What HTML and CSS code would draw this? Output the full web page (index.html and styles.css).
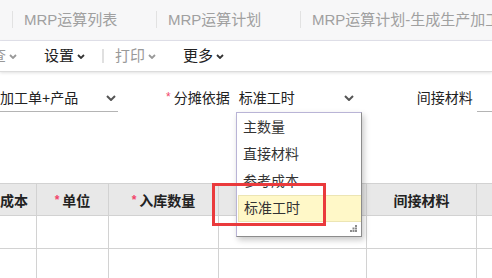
FILE: index.html
```html
<!DOCTYPE html>
<html lang="zh">
<head>
<meta charset="utf-8">
<link rel="stylesheet" href="styles.css">
</head>
<body>
<div class="page">
  <div class="tabs">
    <div class="tab">MRP运算列表</div>
    <div class="tab">MRP运算计划</div>
    <div class="tab tab-wide">MRP运算计划-生成生产加工单</div>
  </div>
  <div class="toolbar">
    <div class="tool tool-first">查<svg class="chev-s" viewBox="0 0 8 5"><polyline points="1,1 4,4 7,1"/></svg></div>
    <div class="tool tool-set">设置<svg class="chev-s dark" viewBox="0 0 8 5"><polyline points="1,1 4,4 7,1"/></svg></div>
    <div class="tool-sep"></div>
    <div class="tool tool-print muted">打印<svg class="chev-s" viewBox="0 0 8 5"><polyline points="1,1 4,4 7,1"/></svg></div>
    <div class="tool">更多<svg class="chev-s dark" viewBox="0 0 8 5"><polyline points="1,1 4,4 7,1"/></svg></div>
  </div>
  <div class="form">
    <div class="form-row">
      <div class="field field-1"><span>加工单+产品</span><svg class="chev" viewBox="0 0 10 6"><polyline points="1,1 5,5 9,1"/></svg></div>
      <div class="label label-1"><span class="req">*</span>分摊依据</div>
      <div class="field field-2"><span>标准工时</span><svg class="chev" viewBox="0 0 10 6"><polyline points="1,1 5,5 9,1"/></svg></div>
      <div class="label label-2">间接材料</div>
      <div class="field field-3"></div>
    </div>
  </div>
  <table class="grid">
    <colgroup>
      <col class="c1"><col class="c2"><col class="c3"><col class="c4"><col class="c5"><col class="c6">
    </colgroup>
    <thead>
      <tr>
        <th class="first">成本</th>
        <th><span class="req">*</span>单位</th>
        <th><span class="req">*</span>入库数量</th>
        <th></th>
        <th>间接材料</th>
        <th></th>
      </tr>
    </thead>
    <tbody>
      <tr><td></td><td></td><td></td><td></td><td></td><td></td></tr>
      <tr><td></td><td></td><td></td><td></td><td></td><td></td></tr>
    </tbody>
  </table>
  <div class="dropdown">
    <div class="opt">主数量</div>
    <div class="opt">直接材料</div>
    <div class="opt">参考成本</div>
    <div class="opt opt-active">标准工时</div>
    <svg class="grip" viewBox="0 0 7 7">
      <rect x="5" y="0" width="2" height="2"/>
      <rect x="2.5" y="2.5" width="2" height="2"/>
      <rect x="5" y="2.5" width="2" height="2"/>
      <rect x="0" y="5" width="2" height="2"/>
      <rect x="2.5" y="5" width="2" height="2"/>
      <rect x="5" y="5" width="2" height="2"/>
    </svg>
  </div>
  <div class="highlight-box"></div>
</div>
</body>
</html>
```
FILE: styles.css
```css
* { box-sizing: border-box; }
html, body { margin: 0; padding: 0; background: #fff; }
body {
  width: 492px;
  height: 278px;
  overflow: hidden;
  font-family: "Liberation Sans", "Noto Sans CJK SC", sans-serif;
  color: #222;
}
.page { position: relative; width: 492px; height: 278px; overflow: hidden; }

.tabs {
  display: flex;
  height: 41px;
  padding-left: 12px;
  background: #f7f7f8;
  border-bottom: 1px solid #e3e3ec;
  align-items: center;
  white-space: nowrap;
}
.tab {
  flex: 0 0 144px;
  height: 17px;
  border-left: 1px solid #e2e2e2;
  padding-left: 11px;
  font-size: 15px;
  line-height: 17px;
  color: #a0a0a0;
  margin-top: -1px;
}
.tab-wide { flex: 0 0 auto; }

.toolbar {
  position: relative;
  z-index: 2;
  display: flex;
  align-items: center;
  height: 31px;
  border-bottom: 1px solid #dcdcdc;
  box-shadow: 0 1px 3px rgba(0,0,0,0.12);
  background: #fff;
  font-size: 15px;
  white-space: nowrap;
}
.tool { display: flex; align-items: center; gap: 3px; line-height: 20px; color: #222; }
.tool.muted { color: #999; }
.tool-first { margin-left: -9px; margin-right: 27px; color: #999; }
.tool-set { margin-right: 17px; }
.tool-sep { width: 2px; height: 14px; background: #e0e0e0; margin-right: 11px; }
.tool-print { margin-right: 27px; }
.chev-s { width: 8px; height: 5px; fill: none; stroke: #999; stroke-width: 1.8; }
.chev-s.dark { stroke: #333; }

.form { height: 111px; padding-top: 13px; }
.form-row { display: flex; align-items: flex-start; font-size: 14px; white-space: nowrap; }
.field {
  display: flex;
  align-items: center;
  justify-content: space-between;
  height: 27px;
  line-height: 26px;
  border-bottom: 1px solid #b4b4b4;
}
.chev { width: 10px; height: 6px; fill: none; stroke: #555; stroke-width: 2; }
.field-1 { width: 118px; padding-right: 2px; }
.field-2 { width: 126px; margin-left: 5px; padding-left: 4px; padding-right: 7px; border-bottom-color: transparent; }
.field-3 { flex: 1; margin-left: 4px; }
.label { line-height: 26px; }
.label-1 { margin-left: 48px; }
.label-2 { margin-left: 56px; }
.req { color: #f2456a; font-size: 12px; margin-right: 3px; position: relative; top: -2px; }

.grid {
  border-collapse: collapse;
  table-layout: fixed;
  width: 537px;
  margin-left: -1px;
}
.c1 { width: 37px; }
.c2 { width: 72px; }
.c3 { width: 110px; }
.c4 { width: 148px; }
.c5 { width: 110px; }
.c6 { width: 60px; }
.grid th, .grid td { border: 1px solid #d2d2d2; padding: 0; }
.grid th {
  height: 32px;
  background: #e8e8e8;
  font-size: 14px;
  font-weight: bold;
  color: #222;
  text-align: center;
  white-space: nowrap;
  overflow: hidden;
}
.grid th.first { text-align: right; padding-right: 11px; }
.grid td { height: 33px; background: #fff; }

.dropdown {
  position: absolute;
  z-index: 3;
  left: 236px;
  top: 112px;
  width: 126px;
  height: 125px;
  background: #fff;
  border: 1px solid;
  border-color: #b9b4d6 #8c8c8c #8c8c8c #b9b4d6;
  box-shadow: 2px 3px 6px rgba(0,0,0,0.22);
  padding-top: 1px;
  font-size: 14px;
}
.opt { height: 27px; line-height: 27px; padding-left: 6px; color: #333; }
.opt-active {
  margin-left: 1px;
  padding-left: 5px;
  background: #fff8c8;
  border: 1px solid #ece5b4;
  border-right: none;
  line-height: 25px;
}
.grip { position: absolute; right: 4px; bottom: 4px; width: 7px; height: 7px; fill: #8a8a8a; }

.highlight-box {
  position: absolute;
  z-index: 4;
  left: 212px;
  top: 183px;
  width: 114px;
  height: 43px;
  border: 3px solid #ea3a3c;
}
```
